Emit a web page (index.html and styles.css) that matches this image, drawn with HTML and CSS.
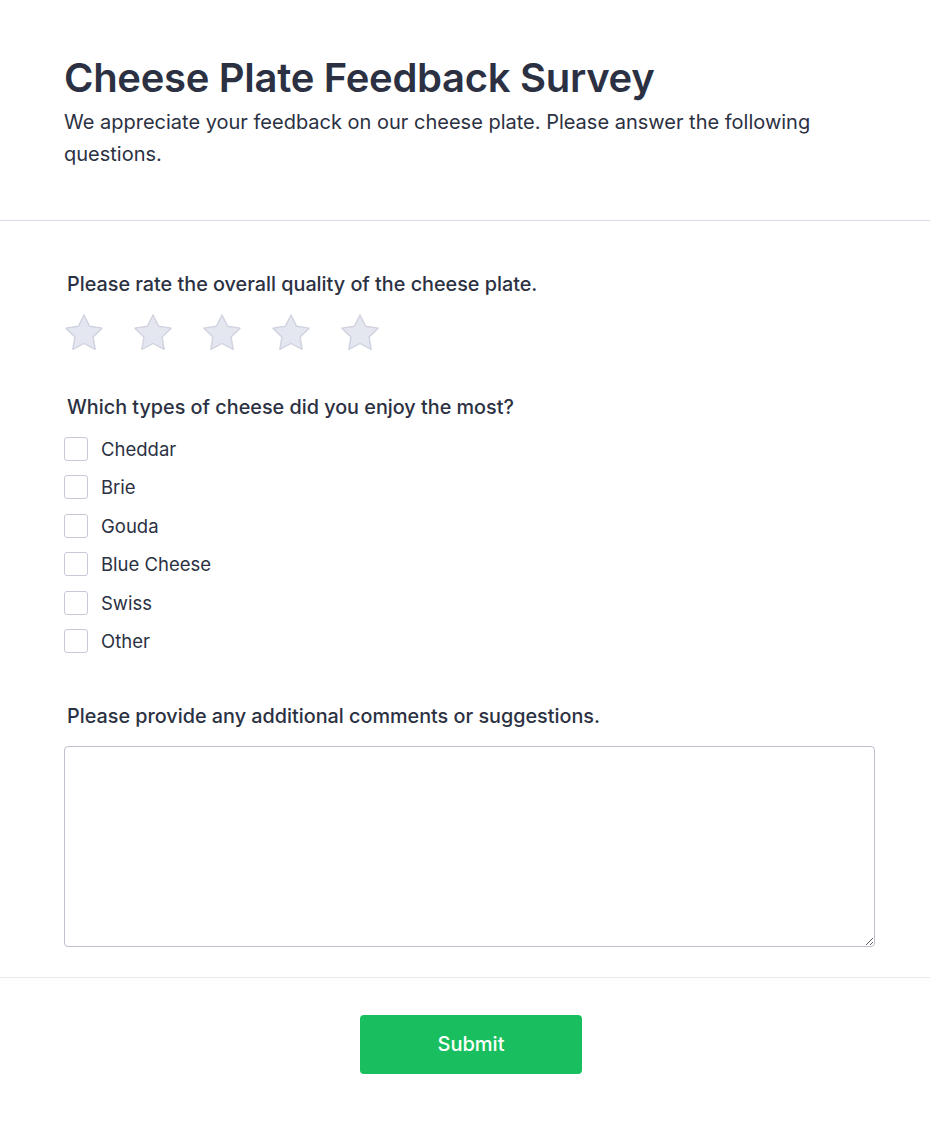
FILE: index.html
```html
<!DOCTYPE html>
<html>
<head>
<meta charset="utf-8">
<link rel="stylesheet" href="styles.css">
</head>
<body>
<div class="survey">
  <header class="head">
    <h1 class="title">Cheese Plate Feedback Survey</h1>
    <p class="desc">We appreciate your feedback on our cheese plate. Please answer the following questions.</p>
  </header>
  <main class="body">
    <section class="question">
      <h2 class="q-title">Please rate the overall quality of the cheese plate.</h2>
      <div class="stars">
        <svg class="star" viewBox="0 0 40 40"><path d="M20 2L25.58 13.31 38.07 15.13 29.04 23.94 31.17 36.37 20 30.5 8.83 36.37 10.96 23.94 1.93 15.13 14.42 13.31Z"/></svg>
        <svg class="star" viewBox="0 0 40 40"><path d="M20 2L25.58 13.31 38.07 15.13 29.04 23.94 31.17 36.37 20 30.5 8.83 36.37 10.96 23.94 1.93 15.13 14.42 13.31Z"/></svg>
        <svg class="star" viewBox="0 0 40 40"><path d="M20 2L25.58 13.31 38.07 15.13 29.04 23.94 31.17 36.37 20 30.5 8.83 36.37 10.96 23.94 1.93 15.13 14.42 13.31Z"/></svg>
        <svg class="star" viewBox="0 0 40 40"><path d="M20 2L25.58 13.31 38.07 15.13 29.04 23.94 31.17 36.37 20 30.5 8.83 36.37 10.96 23.94 1.93 15.13 14.42 13.31Z"/></svg>
        <svg class="star" viewBox="0 0 40 40"><path d="M20 2L25.58 13.31 38.07 15.13 29.04 23.94 31.17 36.37 20 30.5 8.83 36.37 10.96 23.94 1.93 15.13 14.42 13.31Z"/></svg>
      </div>
    </section>
    <section class="question">
      <h2 class="q-title">Which types of cheese did you enjoy the most?</h2>
      <div class="checks">
        <label class="check"><span class="box"></span>Cheddar</label>
        <label class="check"><span class="box"></span>Brie</label>
        <label class="check"><span class="box"></span>Gouda</label>
        <label class="check"><span class="box"></span>Blue Cheese</label>
        <label class="check"><span class="box"></span>Swiss</label>
        <label class="check"><span class="box"></span>Other</label>
      </div>
    </section>
    <section class="question last">
      <h2 class="q-title">Please provide any additional comments or suggestions.</h2>
      <textarea class="comment"></textarea>
    </section>
  </main>
  <footer class="foot">
    <button class="submit">Submit</button>
  </footer>
</div>
</body>
</html>
```
FILE: styles.css
```css
* { box-sizing: border-box; }
html, body { margin: 0; padding: 0; background: #fff; }
body {
  font-family: Inter, "Noto Sans", sans-serif;
  color: #2b3142;
}
.survey { width: 930px; }
.head {
  padding: 54px 64px 50px 64px;
  border-bottom: 1px solid #d9dbe6;
}
.title {
  margin: 0;
  font-size: 40px;
  line-height: 48px;
  font-weight: 600;
  letter-spacing: -0.3px;
}
.desc {
  margin: 4px 0 0;
  font-size: 20px;
  line-height: 32px;
  font-weight: 400;
  max-width: 760px;
}
.body {
  padding: 49px 55px 30px 64px;
  border-bottom: 1px solid #e8e9ef;
}
.question { margin-bottom: 40px; }
.question.last { margin-bottom: 0; margin-top: 49px; }
.q-title {
  margin: 0 0 0 3px;
  font-size: 19.8px;
  line-height: 28px;
  font-weight: 500;
}
.stars {
  display: flex;
  gap: 29px;
  margin-top: 15px;
}
.star { width: 40px; height: 40px; }
.star path {
  fill: #e4e6f0;
  stroke: #d0d3df;
  stroke-width: 1.4;
  stroke-linejoin: round;
}
.checks {
  display: flex;
  flex-direction: column;
  gap: 14.4px;
  margin-top: 16px;
}
.check {
  display: flex;
  align-items: center;
  gap: 13px;
  font-size: 18.5px;
  line-height: 24px;
}
.box {
  width: 24px;
  height: 24px;
  border: 1px solid #c7cad6;
  border-radius: 3px;
  background: #fff;
  flex: none;
}
.comment {
  display: block;
  width: 811px;
  height: 201px;
  margin-top: 16px;
  border: 1px solid #bcc0cf;
  border-radius: 4px;
  resize: vertical;
  font-family: inherit;
}
.foot {
  display: flex;
  justify-content: center;
  padding: 37px 0 49px 12px;
}
.submit {
  width: 222px;
  height: 59px;
  border: none;
  border-radius: 4px;
  background: #19bf5e;
  color: #fff;
  font-family: inherit;
  font-size: 20px;
  font-weight: 500;
}
```
